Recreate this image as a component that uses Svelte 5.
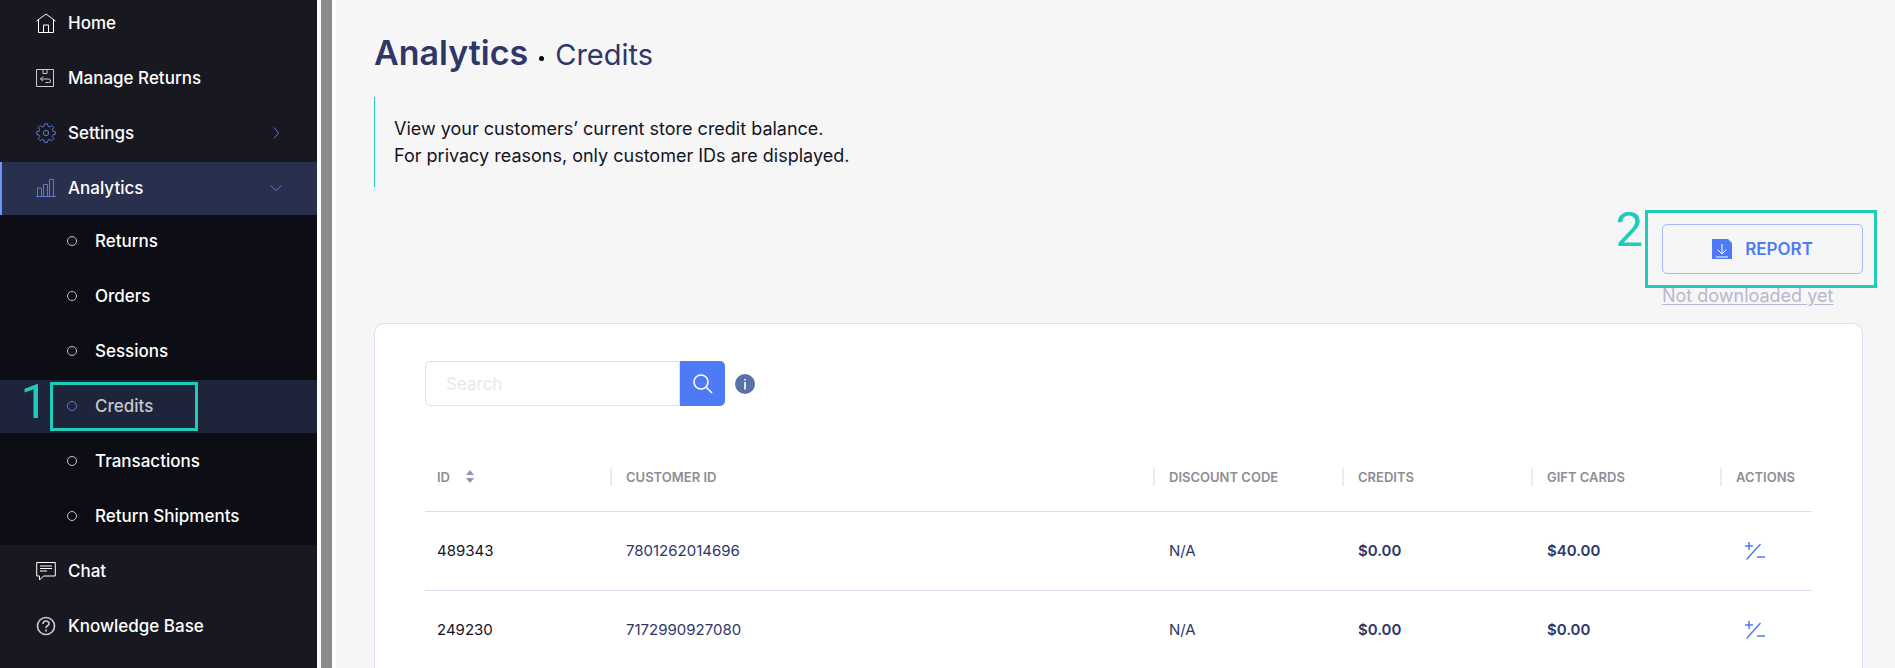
<script lang="ts">
	const subItems = ['Returns', 'Orders', 'Sessions', 'Credits', 'Transactions', 'Return Shipments'];

	const rows = [
		{ id: '489343', customer: '7801262014696', code: 'N/A', credits: '$0.00', gift: '$40.00' },
		{ id: '249230', customer: '7172990927080', code: 'N/A', credits: '$0.00', gift: '$0.00' }
	];

	let active = $state('Credits');
	let analyticsOpen = $state(true);
	let search = $state('');

	function selectItem(event: MouseEvent, name: string) {
		event.preventDefault();
		active = name;
	}
</script>

<div class="shell">
	<nav class="sidebar" aria-label="Main">
		<a class="nav-item" href="#home">
			<svg class="icon" viewBox="0 0 20 20">
				<path d="M.5 8 10 1l9.500 7M2.500 7v12.500h15V7M7.500 19.500v-7.500h5v7.500" />
			</svg>
			Home
		</a>
		<a class="nav-item" href="#returns">
			<svg class="icon soft" viewBox="0 0 20 20">
				<path d="M.5 1.500h17v17h-17zM7 1.500v4h4v-4M7 8.500l-2.500 2.500 2.500 2M4.500 11h8q2 0 2 2t-2 1.500h-3" />
			</svg>
			Manage Returns
		</a>
		<a class="nav-item" href="#settings">
			<svg class="icon blue" viewBox="0 0 20 20">
				<path
					d="M8.500.8h3l.5 2.500 1.600.7 2.200-1.500 2 2-1.500 2.200.700 1.700 2.300.400v2.600l-2.300.500-.700 1.700 1.500 2.100-2 2-2.200-1.400-1.600.700-.5 2.400h-3L8 17l-1.600-.7-2.200 1.400-2-2 1.500-2.100-.7-1.700-2.300-.5V8.800L3 8.400l.7-1.700-1.500-2.200 2-2L6.400 4 8 3.300z"
				/>
				<circle cx="10" cy="10" r="2.700" />
			</svg>
			Settings
			<svg class="chevron" viewBox="0 0 12 12"><path d="m4 .5 4.500 5.500L4 11.500" /></svg>
		</a>
		<button class="nav-item open" aria-expanded={analyticsOpen} onclick={() => (analyticsOpen = !analyticsOpen)}>
			<svg class="icon blue" viewBox="0 0 20 20">
				<path d="M0 18.500h20M1.500 18v-8h4v8M7.500 18V6.500h4V18M13.500 18V1.500h4V18" />
			</svg>
			Analytics
			<svg class="chevron" viewBox="0 0 12 12"><path d="m.5 3.500 5.500 5 5.500-5" /></svg>
		</button>

		{#if analyticsOpen}
			<div class="submenu">
				{#each subItems as name}
					<a class="sub-item" class:active={active === name} href="#{name}" onclick={(e) => selectItem(e, name)}>
						<span class="bullet"></span>
						{name}
						{#if name === 'Credits'}
							<span class="step step-one" aria-hidden="true"><span class="number">1</span></span>
						{/if}
					</a>
				{/each}
			</div>
		{/if}

		<a class="nav-item" href="#chat">
			<svg class="icon" viewBox="0 0 20 20">
				<path d="M.7 1.500h18.600v13.500H7.500L3.500 19v-4H.7zM4 5h12M4 7.500h12M4 10h7" />
			</svg>
			Chat
		</a>
		<a class="nav-item" href="#knowledge">
			<svg class="icon soft thick" viewBox="0 0 20 20">
				<circle cx="10" cy="10" r="8.500" />
				<path d="M7 8q0-3 3-3t3 2.800q0 1.200-1.500 2T10 12M10 13.500v2" />
			</svg>
			Knowledge Base
		</a>
	</nav>

	<div class="divider"></div>

	<main class="content">
		<h1><strong>Analytics</strong><span class="dot"></span><span>Credits</span></h1>

		<p class="intro">
			View your customers’ current store credit balance.<br />
			For privacy reasons, only customer IDs are displayed.
		</p>

		<div class="report-row">
			<div class="report">
				<button class="report-button">
					<svg viewBox="0 0 20 20" width="20" height="20">
						<path class="sheet" d="M0 0h16l4 4v16H0z" />
						<path class="arrow" d="M10 5v9.500M5.500 10.500 10 15l4.500-4.500M4 18h12" />
					</svg>
					REPORT
				</button>
				<a class="status" href="#report">Not downloaded yet</a>
				<span class="step step-two" aria-hidden="true"><span class="number">2</span></span>
			</div>
		</div>

		<section class="card">
			<form class="search" onsubmit={(e) => e.preventDefault()}>
				<input type="search" placeholder="Search" aria-label="Search" bind:value={search} />
				<button class="search-button" aria-label="Search">
					<svg viewBox="0 0 20 20" width="20" height="20">
						<circle cx="8" cy="8" r="7" />
						<path d="m13 13 6 6" />
					</svg>
				</button>
				<svg class="info" viewBox="0 0 20 20" width="20" height="20">
					<circle cx="10" cy="10" r="10" />
					<path d="M10 5v1.500M10 8v7.500" />
				</svg>
			</form>

			<table>
				<thead>
					<tr>
						<th class="col">
							<div>
								ID
								<svg class="sort" viewBox="0 0 8 13" width="8" height="13">
									<path d="M4 0l4 5H0zM0 8h8l-4 5z" />
								</svg>
							</div>
						</th>
						<th><div>CUSTOMER ID</div></th>
						<th class="col"><div>DISCOUNT CODE</div></th>
						<th class="col"><div>CREDITS</div></th>
						<th class="col"><div>GIFT CARDS</div></th>
						<th class="col-actions"><div>ACTIONS</div></th>
					</tr>
				</thead>
				<tbody>
					{#each rows as row}
						<tr>
							<td class="id">{row.id}</td>
							<td>{row.customer}</td>
							<td>{row.code}</td>
							<td class="amount">{row.credits}</td>
							<td class="amount">{row.gift}</td>
							<td>
								<button class="adjust" aria-label="Adjust credit of {row.customer}">
									<svg viewBox="0 0 20 20" width="20" height="20">
										<path d="M0 5h8M4 1v8M1.500 18.500l14-15.500M12 16h8" />
									</svg>
								</button>
							</td>
						</tr>
					{/each}
				</tbody>
			</table>
		</section>
	</main>
</div>

<style>
	:global(body) {
		margin: 0;
	}

	.shell {
		--navy: #2e3768;
		--blue: #4e7af7;
		--teal: #20cbbb;
		--line: #dbdff3;

		display: flex;
		height: 100vh;
		overflow: hidden;
		background: #f6f6f6;
		color: #14141f;
		font-family: Inter, sans-serif;
		font-size: 18px;
	}

	button,
	input {
		font: inherit;
	}

	button {
		cursor: pointer;
	}

	svg {
		flex: none;
		fill: none;
		stroke: currentColor;
	}

	/* Sidebar */
	.sidebar {
		flex: none;
		width: 317px;
		margin-top: -3px; /* list is scrolled a little */
		background: #181820;
	}

	.nav-item,
	.sub-item {
		display: flex;
		align-items: center;
		box-sizing: border-box;
		width: 100%;
		height: 53px;
		margin-bottom: 2px;
		padding: 0 35px 1px 36px;
		color: #fff;
		font-size: 17px;
		font-weight: 500;
		text-decoration: none;
	}

	.nav-item {
		gap: 12px;
		border: 0;
		background: none;
	}

	.nav-item.open {
		margin-bottom: 0;
		padding-left: 34px;
		border-left: 2px solid #6f94ff;
		background: #29304d;
	}

	.icon {
		width: 20px;
		height: 20px;
	}

	.soft {
		color: #ccccd0;
	}

	.thick {
		stroke-width: 1.6;
	}

	.blue,
	.chevron {
		color: #5c7bd0;
	}

	.chevron {
		width: 12px;
		height: 12px;
		margin-left: auto;
	}

	.submenu {
		display: flow-root;
		background: #0d0d15;
	}

	.sub-item {
		position: relative;
		gap: 18px;
		padding-left: 67px;
	}

	.sub-item.active {
		background: #1e2439;
		color: #c5c6cb;
	}

	.bullet {
		box-sizing: border-box;
		width: 10px;
		height: 10px;
		border: 1px solid #c5c6cb;
		border-radius: 50%;
	}

	.active .bullet {
		border-color: #5c7bd0;
	}

	/* Numbered step frames */
	.step {
		position: absolute;
		box-sizing: border-box;
		border: 3px solid var(--teal);
		pointer-events: none;
	}

	.number {
		position: absolute;
		top: -8px;
		right: 100%;
		margin-right: 5px;
		color: var(--teal);
		font: 400 49px/49px Roboto, sans-serif;
	}

	.step-one {
		top: 2px;
		left: 50px;
		width: 148px;
		height: 49px;
	}

	.step-two {
		inset: -14px -14px auto -17px;
		height: 78px;
	}

	.divider {
		flex: none;
		width: 11px;
		border: solid #fdfdfd;
		border-width: 0 4px;
		background: #8b8b8b;
	}

	/* Content */
	.content {
		display: flex;
		flex: 1;
		flex-direction: column;
		min-width: 0;
		padding: 32px 32px 0 38px;
	}

	h1 {
		display: flex;
		align-items: baseline;
		margin: 0;
		color: var(--navy);
		font-size: 29px;
		font-weight: 400;
		line-height: 41px;
	}

	h1 strong {
		font-size: 34px;
		font-weight: 600;
	}

	.dot {
		width: 5px;
		height: 5px;
		margin: 0 11px;
		border-radius: 50%;
		background: #000;
		transform: translateY(-4px);
	}

	.intro {
		margin: 22px 0 0;
		padding: 18px 19px;
		border-left: 1px solid var(--teal);
		line-height: 27px;
	}

	.report-row {
		display: flex;
		justify-content: flex-end;
		margin-top: 37px;
	}

	.report {
		position: relative;
		width: 201px;
	}

	.report-button {
		display: flex;
		align-items: center;
		justify-content: center;
		gap: 13px;
		width: 100%;
		height: 50px;
		border: 1px solid #a3bbf8;
		border-radius: 5px;
		background: none;
		color: var(--blue);
		font-size: 17px;
		font-weight: 600;
	}

	.sheet {
		fill: var(--blue);
		stroke: none;
	}

	.arrow {
		stroke: #fff;
	}

	.status {
		display: block;
		margin-top: 8px;
		color: #b7b8cf;
		line-height: 27px;
		text-underline-offset: 2px;
	}

	.card {
		flex: 1;
		margin-top: 14px;
		padding: 37px 50px 0;
		border: 1px solid var(--line);
		border-bottom: 0;
		border-radius: 10px 10px 0 0;
		background: #fff;
	}

	.search {
		display: flex;
		align-items: center;
	}

	.search input {
		box-sizing: border-box;
		width: 255px;
		height: 45px;
		padding: 0 20px;
		border: 1px solid var(--line);
		border-radius: 5px 0 0 5px;
		outline: none;
		font-size: 17px;
		appearance: none;
	}

	.search input::placeholder {
		color: #e8e8ea;
	}

	.search-button {
		display: grid;
		place-items: center;
		width: 45px;
		height: 45px;
		margin-right: 10px;
		padding: 0;
		border: 0;
		border-radius: 0 5px 5px 0;
		background: var(--blue);
		color: #fff;
		stroke-width: 1.6;
	}

	.info circle {
		fill: #5a70a8;
		stroke: none;
	}

	.info path {
		stroke: #fff;
		stroke-width: 1.6;
	}

	table {
		width: 100%;
		margin-top: 37px;
		border-collapse: collapse;
		table-layout: fixed;
		text-align: left;
	}

	.col {
		width: 189px;
	}

	.col-actions {
		width: 88px;
	}

	th,
	td {
		box-sizing: border-box;
		padding: 0 0 0 12px;
		border-bottom: 1px solid var(--line);
	}

	th {
		height: 68px;
		padding-right: 2px;
		color: #8d8d96;
		font-size: 13px;
		font-weight: 600;
	}

	th div {
		display: flex;
		align-items: center;
		gap: 16px;
		height: 18px;
		border-right: 2px solid #e9edf3;
		white-space: nowrap;
	}

	th:last-child div {
		border-right: 0;
	}

	.sort {
		fill: #8d94b5;
		stroke: none;
	}

	td {
		height: 79px;
		color: var(--navy);
		font-size: 15px;
	}

	.id {
		color: #14141f;
	}

	.amount {
		font-weight: 600;
	}

	.adjust {
		display: block;
		margin-left: 9px;
		padding: 0;
		border: 0;
		background: none;
		color: var(--blue);
		stroke-width: 1.5;
	}

	.adjust svg {
		display: block;
	}
</style>
